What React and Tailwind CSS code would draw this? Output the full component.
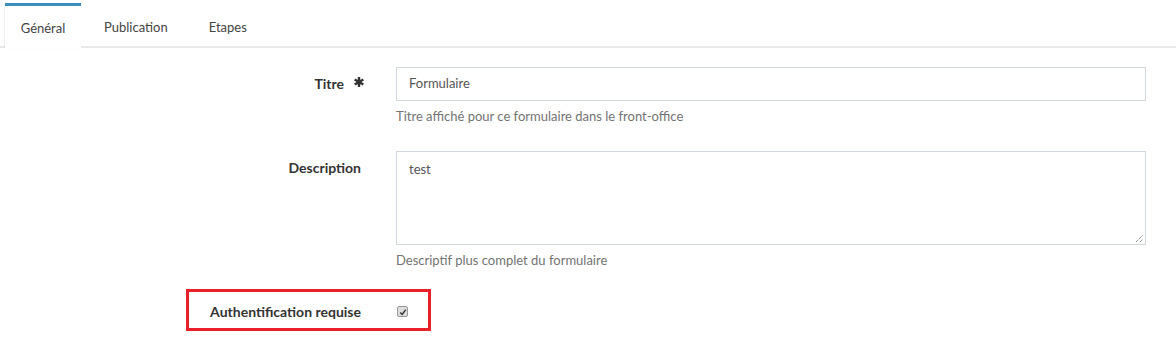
import React from "react";

const Asterisk = () => (
  <svg viewBox="0 0 10 10" className="w-[10px] h-[10px]" fill="#333">
    <rect x="3.8" y="0" width="2.4" height="10" />
    <rect x="3.8" y="0" width="2.4" height="10" transform="rotate(60 5 5)" />
    <rect x="3.8" y="0" width="2.4" height="10" transform="rotate(-60 5 5)" />
    <circle cx="5" cy="5" r="2.6" />
  </svg>
);

const FormRow = ({ label, required, children, className = "", labelPad = "pt-[6px]" }) => (
  <div className={`flex ${className}`}>
    <div className={`w-[361px] shrink-0 flex justify-end items-start font-bold text-[14px] text-[#333] ${labelPad}`}>
      <span>{label}</span>
      {required && (
        <span className="ml-[10px] mr-[-3px] mt-[4px]">
          <Asterisk />
        </span>
      )}
    </div>
    <div className="ml-[35px] w-[750px]">{children}</div>
  </div>
);

export default function App() {
  return (
    <div className="w-[1176px] h-[340px] bg-white overflow-hidden font-['Lato',sans-serif] text-[13px]">
      <div className="pt-[3px] flex border-b-2 border-[#e9e9e9] pl-[5px]">
        <div className="w-[76px] h-[45px] mb-[-2px] pt-[4px] border-t-[3px] border-[#3c8dbc] bg-white shadow-[-1px_0_1px_rgba(0,0,0,0.06)] flex items-center justify-center text-[#444]">
          Général
        </div>
        <div className="ml-[23px] h-[43px] flex items-center text-[#444] pt-[7px]">Publication</div>
        <div className="ml-[41px] h-[43px] flex items-center text-[#444] pt-[7px]">Etapes</div>
      </div>

      <div className="pt-[19px]">
        <FormRow label="Titre" required>
          <div className="h-[34px] border border-[#d2d6de] px-[12px] flex items-center text-[#555]">
            Formulaire
          </div>
          <div className="mt-[6px] text-[#737373]">Titre affiché pour ce formulaire dans le front-office</div>
        </FormRow>

        <FormRow label="Description" className="mt-[24px]">
          <div className="relative h-[94px] border border-[#d2d6de] px-[12px] pt-[8px] text-[#555]">
            test
            <svg className="absolute right-[1px] bottom-[1px]" width="9" height="9" viewBox="0 0 9 9">
              <line x1="1" y1="8" x2="8" y2="1" stroke="#555" strokeWidth="1" strokeDasharray="1 1" />
              <line x1="5" y1="8" x2="8" y2="5" stroke="#555" strokeWidth="1" strokeDasharray="1 1" />
            </svg>
          </div>
          <div className="mt-[6px] text-[#737373]">Descriptif plus complet du formulaire</div>
        </FormRow>

        <div className="relative mt-[18px]">
          <FormRow label="Authentification requise" labelPad="pt-[13px]">
            <div className="pt-[18px] pb-[14px]">
              <div className="w-[11px] h-[11px] ml-[1px] rounded-[2px] border border-[#999] bg-[#ddd] flex items-center justify-center">
                <svg viewBox="0 0 10 10" className="w-[8px] h-[8px]">
                  <path d="M1.5 5.5 L4 8 L8.5 2" fill="none" stroke="#333" strokeWidth="1.8" />
                </svg>
              </div>
            </div>
          </FormRow>
          <div className="absolute left-[186px] top-[1px] w-[245px] h-[42px] border-[3px] border-[#e8202a]" />
        </div>
      </div>
    </div>
  );
}
